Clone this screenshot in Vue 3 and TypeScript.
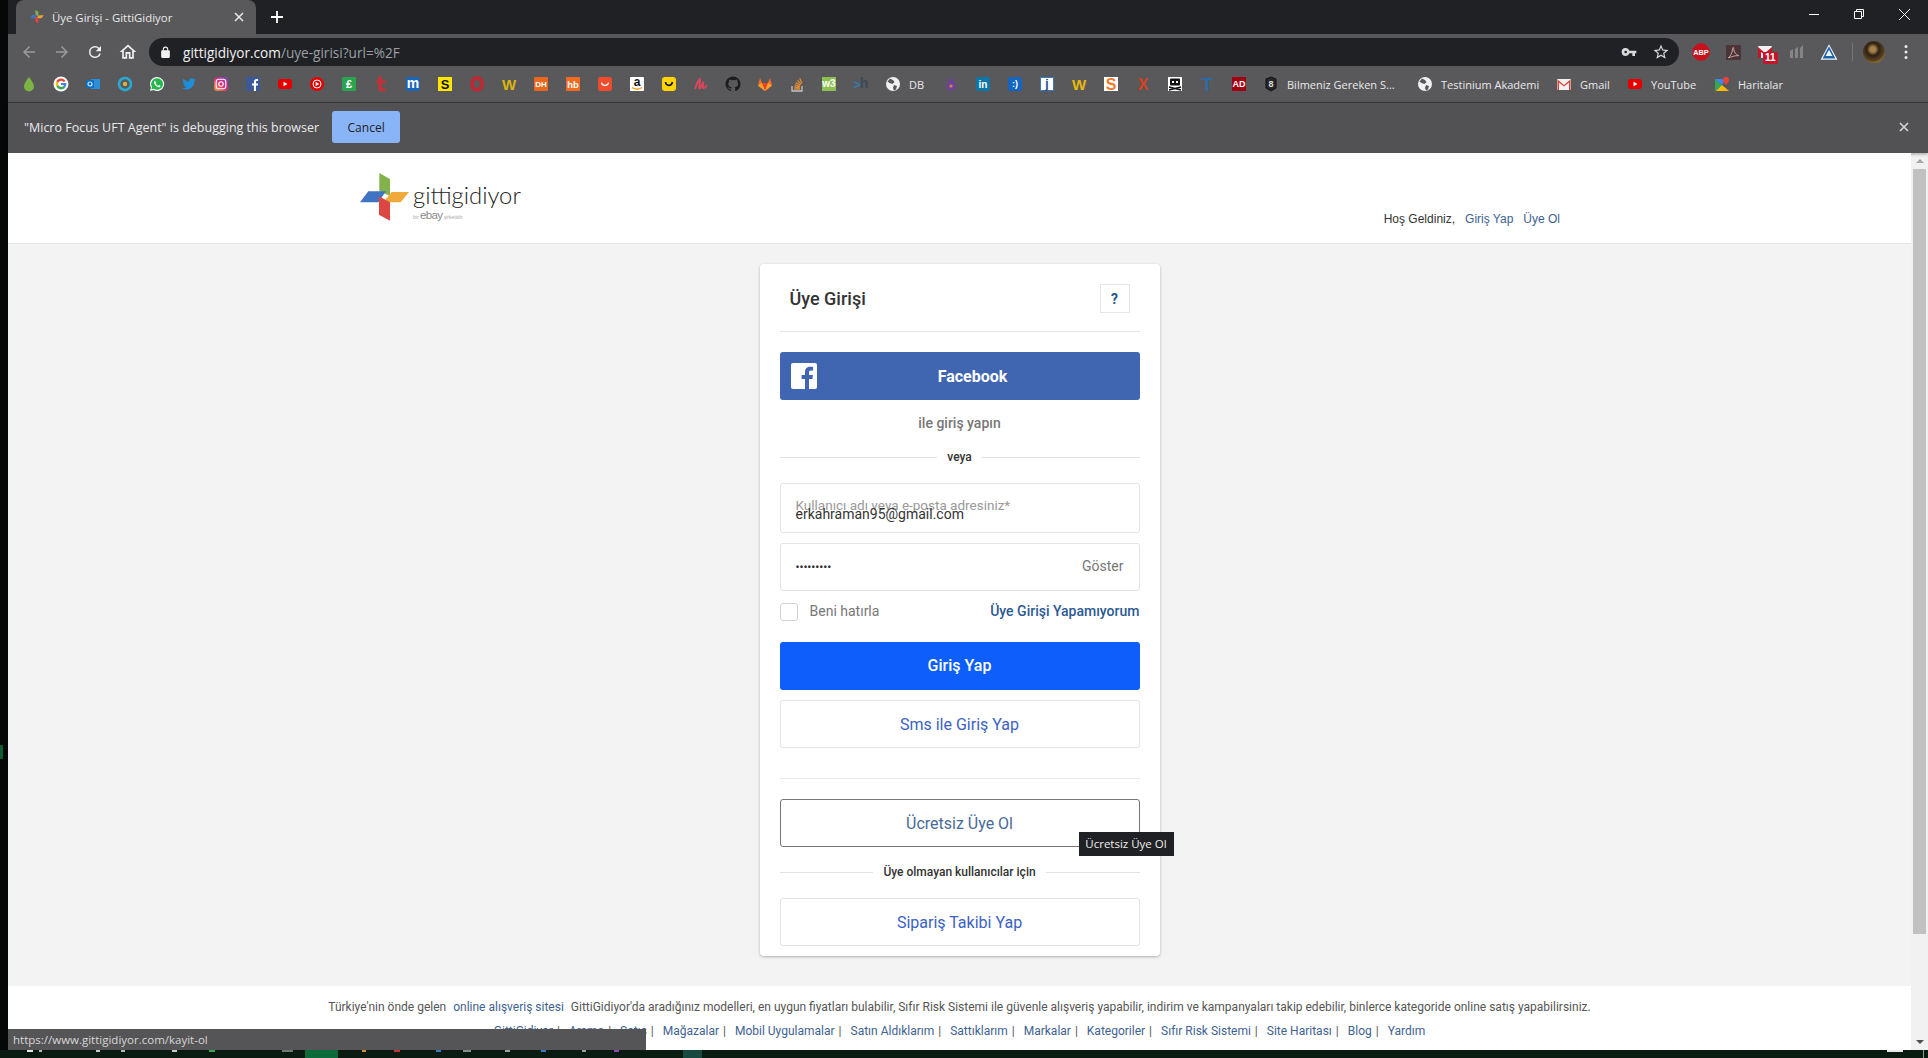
<script setup lang="ts">
// Chrome window around the GittiGidiyor login page.
type Mark = { svg?: string; label?: string; width?: number };

const txt = (s: string, fill: string, size = 11, y = 12, weight = 700) =>
  `<text x="8" y="${y}" text-anchor="middle" font-family="Liberation Sans, sans-serif" font-size="${size}" font-weight="${weight}" fill="${fill}">${s}</text>`;
const tile = (bg: string, r = 1) => `<rect x="1" y="1" width="14" height="14" rx="${r}" fill="${bg}"/>`;
const globe =
  '<circle cx="8" cy="8" r="7" fill="#f1f1f1"/><path d="M5 2.5l3 1.5 1.5 2-2 2-3-1-2-1.5zM9 9l3 1-1 3.5-2 1-1-2.5z" fill="#58585a"/>';

const icons: Record<string, string> = {
  drop: '<path d="M8 1C8 1 3 7 3 10.5a5 5 0 0 0 10 0C13 7 8 1 8 1z" fill="#7cb342"/>',
  google:
    '<circle cx="8" cy="8" r="7.5" fill="#fff"/><path d="M12.6 5A5.4 5.4 0 0 0 3.4 5.2L5.4 6.8A3 3 0 0 1 10.6 6z" fill="#ea4335"/><path d="M3.4 5.2a5.4 5.4 0 0 0 0 5.6l2-1.6a3 3 0 0 1 0-2.4z" fill="#fbbc05"/><path d="M3.4 10.8a5.4 5.4 0 0 0 8.8.6l-1.9-1.5a3 3 0 0 1-4.9-.7z" fill="#34a853"/><path d="M8 7v2h3l-.7 1 1.9 1.4A5.4 5.4 0 0 0 13.4 7z" fill="#4285f4"/>',
  outlook:
    '<rect x="6" y="3" width="9" height="10" fill="#2a8fd8"/><rect x="1" y="4" width="8" height="8" rx="1" fill="#0a6ebd"/><circle cx="5" cy="8" r="2" fill="none" stroke="#cfe6f7" stroke-width="1.2"/>',
  ring: '<circle cx="8" cy="8" r="6" fill="none" stroke="#29a9d6" stroke-width="2.6"/><circle cx="8" cy="8" r="2.2" fill="#d8b23c"/>',
  whatsapp:
    '<path d="M8 1a7 7 0 0 0-6 10.6L1 15l3.5-1A7 7 0 1 0 8 1z" fill="#fff"/><path d="M8 2.2a5.8 5.8 0 0 0-5 8.8l-.6 2.3 2.4-.6A5.8 5.8 0 1 0 8 2.2z" fill="#25b84c"/><path d="M5.8 4.8c-.8.6-1 1.700-.4 3 .8 1.700 2.300 3.100 4 3.500 1 .2 1.900-.4 2.100-1.300L9.900 9l-.9.800C8 9.400 7 8.400 6.600 7.300l.7-.9z" fill="#fff"/>',
  twitter:
    '<path d="M15 3.600c-.5.200-1 .4-1.600.4.600-.3 1-.9 1.200-1.500-.5.300-1.100.5-1.700.7a2.800 2.800 0 0 0-4.800 2.500A8 8 0 0 1 2.300 2.800a2.800 2.800 0 0 0 .9 3.700c-.5 0-.9-.1-1.300-.3 0 1.400 1 2.500 2.300 2.800-.4.1-.8.1-1.300 0 .4 1.100 1.400 1.900 2.600 2A5.700 5.700 0 0 1 1 12.200 8 8 0 0 0 13.300 5.100c.6-.4 1.200-.9 1.700-1.500z" fill="#1d8fd8"/>',
  insta:
    '<defs><linearGradient id="ig" x1="0" y1="1" x2="1" y2="0"><stop offset="0" stop-color="#f7a437"/><stop offset=".5" stop-color="#d92d77"/><stop offset="1" stop-color="#7a3fc4"/></linearGradient></defs><rect x="1" y="1" width="14" height="14" rx="3.500" fill="url(#ig)"/><rect x="3.200" y="3.200" width="9.600" height="9.600" rx="2.500" fill="none" stroke="#fff" stroke-width="1.100"/><circle cx="8" cy="8" r="2.200" fill="none" stroke="#fff" stroke-width="1.100"/>',
  fb: tile('#3b5998') + '<path d="M11 15V9.500h1.800l.3-2.100H11V6.100c0-.6.200-1 1-1h1.100V3.200C12.900 3.200 12.300 3.100 11.600 3.100 10 3.100 8.900 4.100 8.900 5.900v1.500H7v2.100h1.900V15z" fill="#fff"/>',
  yt: '<rect x="1" y="3" width="14" height="10" rx="3" fill="#e60000"/><path d="M6.500 5.700v4.600L10.500 8z" fill="#fff"/>',
  ytm: '<circle cx="8" cy="8" r="7" fill="#e60000"/><circle cx="8" cy="8" r="4" fill="none" stroke="#fff" stroke-width="1"/><path d="M6.600 5.800v4.400L10.200 8z" fill="#fff"/>',
  lira: tile('#2aa44f') + txt('₤', '#fff', 11),
  tumblr: '<path d="M5.500 .5h3.500v3.800h3.500v3H9v3.700c0 1.200.9 1.600 3.500 1.200V15.500H8.200C6 15.500 5 14 5 12.300V7.300H3.500V4.800C5 4.300 5.300 2.800 5.500 .5z" fill="#c0323a"/>',
  medium: tile('#1a66b8', 2) + txt('m', '#fff', 14, 12),
  s: tile('#ffe600', 0) + txt('S', '#111', 13, 13),
  opera: '<ellipse cx="8" cy="8" rx="5" ry="6" fill="none" stroke="#b92a35" stroke-width="4"/>',
  w: txt('W', '#dcb50f', 15, 14),
  dh: tile('#e9681e', 1) + txt('DH', '#fff', 8, 11),
  hb: tile('#f36a21', 1) + txt('hb', '#fff', 9.500, 11.500),
  smile: tile('#ee4a2e', 2) + '<path d="M4.500 6.500c.5 4 6.500 4 7 0" fill="none" stroke="#fff" stroke-width="1.300"/>',
  amazon: tile('#fff', 1) + txt('a', '#111', 12, 10) + '<path d="M3 11.500c3 2 7 2 10 0" fill="none" stroke="#f90" stroke-width="1.400"/>',
  yellow: tile('#ffd400', 3) + '<path d="M4.500 6c.5 4.500 6 4.500 7 0" fill="none" stroke="#111" stroke-width="1.700"/>',
  script: '<path d="M2 13C3.500 8 5.500 4.500 7 3c.8 1.500-1.300 7-.7 9C7.500 13 9 8.500 10.300 6c0 2.500-1 5.500 0 6s2.300-1 3.700-3" fill="none" stroke="#d8455c" stroke-width="2"/>',
  github:
    '<path d="M8 .500a7.500 7.500 0 0 0-2.400 14.600c.4.100.5-.2.500-.4v-1.300c-2.100.5-2.500-1-2.500-1-.4-.9-.9-1.100-.9-1.100-.7-.5 0-.5 0-.5.800.1 1.200.8 1.200.8.700 1.200 1.800.8 2.300.6 0-.5.300-.8.500-1-1.700-.2-3.400-.8-3.400-3.700 0-.8.300-1.500.8-2-.1-.2-.3-1 .1-2 0 0 .6-.2 2.100.8a7 7 0 0 1 3.800 0c1.500-1 2.100-.8 2.100-.8.400 1 .2 1.800.1 2 .5.500.8 1.200.8 2 0 2.900-1.800 3.500-3.400 3.700.3.200.5.700.5 1.400v2c0 .2.100.5.500.4A7.500 7.500 0 0 0 8 .500z" fill="#1b1b1d"/>',
  gitlab:
    '<path d="M8 15L1 9.500 3 2l2 5h6l2-5 2 7.500z" fill="#fc6d26"/><path d="M8 15L5 7h6z" fill="#e24329"/><path d="M1 9.500L5 7l3 8zM15 9.500L11 7l-3 8z" fill="#fca326"/>',
  stack:
    '<path d="M3 10v5h10v-5" fill="none" stroke="#c4c3c3" stroke-width="1.300"/><path d="M5 13h6M5.200 11l5.600.5M5.800 8.800l5.200 1.500M6.800 6.600l4.600 2.700M8.600 4.400l3.500 4M10.800 2.300l2 5" stroke="#e08a32" stroke-width="1.300" fill="none"/>',
  w3: tile('#8cc152', 0) + txt('w3', '#fff', 10, 11),
  chevh: txt('&gt;', '#3678ad', 12, 13).replace('x="8"', 'x="4"') + txt('h', '#3a4a5a', 14, 12).replace('x="8"', 'x="11"'),
  globe,
  purple: '<path d="M5 2c0 2 1 3 3 3s3-1 3-3" fill="none" stroke="#6f3fa0" stroke-width="1.300"/><circle cx="8" cy="10" r="4.500" fill="#6f3fa0"/><circle cx="8" cy="10" r="1.600" fill="#d58a2d"/>',
  linkedin: tile('#0e76a8', 2) + txt('in', '#fff', 10, 12),
  blue: tile('#1565c0', 2) + txt(':)', '#fff', 9, 11),
  j: '<rect x="1.500" y="1.500" width="13" height="13" fill="#fff" stroke="#3b78c2"/>' + txt('j', '#1b4a90', 12, 12),
  wy: txt('W', '#e8b90c', 15, 14),
  so: '<rect x="1" y="1" width="14" height="14" fill="#fff"/>' + txt('S', '#f07c2b', 16, 14),
  x: txt('X', '#d8401f', 16, 14),
  skull: '<rect x="1" y="1" width="14" height="14" fill="#fff"/><rect x="3" y="2.500" width="10" height="7" rx="1" fill="#111"/><rect x="5" y="5" width="2" height="2" fill="#fff"/><rect x="9" y="5" width="2" height="2" fill="#fff"/><path d="M2 14l12-3M2 11l12 3" stroke="#111" stroke-width="1.500"/>',
  t: txt('T', '#2b6ca8', 18, 15),
  ad: tile('#a00012', 0) + txt('AD', '#fff', 9, 11),
  shield: '<path d="M3 3l5-2 5 2v9l-5 3-5-3z" fill="#26262a" stroke="#111"/>' + txt('8', '#ddd', 9, 11),
  gmail: '<rect x="1" y="3" width="14" height="11" rx="1" fill="#f2f2f2"/><path d="M1.500 3.500L8 9l6.500-5.500V14H13V6.500L8 10.500 3 6.500V14H1.500z" fill="#d8402f"/>',
  maps: '<path d="M1 3l7 6-6 6H1z" fill="#34a853"/><path d="M1 3h7l2 2-2 4z" fill="#4285f4"/><path d="M8 9l7 6H2z" fill="#fbbc05"/><path d="M12 1a3 3 0 0 0-3 3c0 2 3 5 3 5s3-3 3-5a3 3 0 0 0-3-3z" fill="#ea4335"/>',
};

const marks: Mark[] = [
  ...[
    'drop', 'google', 'outlook', 'ring', 'whatsapp', 'twitter', 'insta', 'fb', 'yt', 'ytm', 'lira', 'tumblr',
    'medium', 's', 'opera', 'w', 'dh', 'hb', 'smile', 'amazon', 'yellow', 'script', 'github', 'gitlab', 'stack',
    'w3', 'chevh',
  ].map((k) => ({ svg: icons[k] })),
  { svg: icons.globe, label: 'DB', width: 58 },
  ...['purple', 'linkedin', 'blue', 'j', 'wy', 'so', 'x', 'skull', 't', 'ad', 'shield'].map((k) => ({ svg: icons[k] })),
  { label: 'Bilmeniz Gereken S...', width: 122 },
  { svg: icons.globe, label: 'Testinium Akademi', width: 139 },
  { svg: icons.gmail, label: 'Gmail', width: 71 },
  { svg: icons.yt, label: 'YouTube', width: 87 },
  { svg: icons.maps, label: 'Haritalar', width: 90 },
];

const footerLinks = [
  'GittiGidiyor', 'Arama', 'Satış', 'Mağazalar', 'Mobil Uygulamalar', 'Satın Aldıklarım', 'Sattıklarım',
  'Markalar', 'Kategoriler', 'Sıfır Risk Sistemi', 'Site Haritası', 'Blog', 'Yardım',
];

// tops of the taskbar icons peeking out below the window
const taskbits = [
  { x: 27, w: 6, c: '#e6e6e6' }, { x: 39, w: 3, c: '#bbb' }, { x: 96, w: 4, c: '#c9c9c9' }, { x: 121, w: 4, c: '#b5b5b5' },
  { x: 172, w: 5, c: '#c9c9c9' }, { x: 209, w: 6, c: '#2fa84f' }, { x: 282, w: 11, c: '#6e7a72' }, { x: 305, w: 33, c: '#0d6b3c', h: 8 },
  { x: 362, w: 4, c: '#d8902f' }, { x: 394, w: 6, c: '#c8352c' }, { x: 436, w: 5, c: '#2d7fc9' }, { x: 463, w: 8, c: '#87908a' },
  { x: 505, w: 5, c: '#9aa39d' }, { x: 541, w: 5, c: '#2d7fc9' }, { x: 582, w: 4, c: '#9aa39d' }, { x: 614, w: 5, c: '#8d4ab8' },
  { x: 683, w: 19, c: '#17493f', h: 8 }, { x: 1887, w: 16, c: '#e9e9e9' }, { x: 1923, w: 1, c: '#8e9a92', h: 8 },
];
const taskFlow = taskbits.map((b, i) => ({
  ...b,
  gap: b.x - (i ? taskbits[i - 1].x + taskbits[i - 1].w : 0),
}));
</script>

<template>
  <div class="screen">
    <div class="desk-blip" />
    <div class="window">
      <div class="tabstrip">
        <div class="tab">
          <svg class="favicon" viewBox="0 0 50 50" width="14" height="14">
            <path d="M19.300 0L30 6V23L19.300 18.300z" fill="#7fb24a" />
            <path d="M0 29.300L8.300 18.300H26L18.300 29.300z" fill="#3f73c4" />
            <path d="M23.300 29.300L31.700 19H49L40.700 29.300z" fill="#f0a531" />
            <path d="M19 23.300L30 29.300V47.700L19 41.700z" fill="#dd4340" />
          </svg>
          <span class="tab-title">Üye Girişi - GittiGidiyor</span>
          <svg class="tab-close" viewBox="0 0 10 10" width="10" height="10">
            <path d="M1 1l8 8M9 1l-8 8" stroke="#e8eaed" stroke-width="1.500" />
          </svg>
        </div>
        <svg class="newtab" viewBox="0 0 12 12" width="12" height="12">
          <path d="M6 0v12M0 6h12" stroke="#fff" stroke-width="1.800" />
        </svg>
        <div class="winctl">
          <span class="wbtn"><svg viewBox="0 0 10 10" width="10" height="10"><path d="M0 5.500h10" stroke="#fff" /></svg></span>
          <span class="wbtn"><svg viewBox="0 0 10 10" width="10" height="10"><path d="M.5 2.500h7v7h-7zM2.500 2.500v-2h7v7h-2" fill="none" stroke="#fff" /></svg></span>
          <span class="wbtn last"><svg viewBox="0 0 10 10" width="11" height="11"><path d="M0 0l10 10M10 0L0 10" stroke="#fff" stroke-width=".9" /></svg></span>
        </div>
      </div>

      <div class="toolbar">
        <span class="nav dim"><svg viewBox="0 0 24 24" width="18" height="18"><path d="M20 11H7.830l5.590-5.590L12 4l-8 8 8 8 1.410-1.410L7.830 13H20v-2z" /></svg></span>
        <span class="nav dim"><svg viewBox="0 0 24 24" width="18" height="18"><path d="M4 11h12.170l-5.590-5.590L12 4l8 8-8 8-1.410-1.410L16.170 13H4v-2z" /></svg></span>
        <span class="nav"><svg viewBox="0 0 24 24" width="18" height="18"><path d="M17.650 6.350A7.960 7.960 0 0 0 12 4a8 8 0 1 0 7.750 10h-2.080A6 6 0 1 1 12 6c1.660 0 3.140.69 4.220 1.780L13 11h7V4l-2.350 2.350z" /></svg></span>
        <span class="nav"><svg viewBox="0 0 24 24" width="20" height="20"><path d="M12 5.690l5 4.500V18h-2v-6H9v6H7v-7.810l5-4.500M12 3L2 12h3v8h6v-6h2v6h6v-8h3L12 3z" /></svg></span>
        <div class="omnibox">
          <svg class="lock" viewBox="0 0 24 24" width="13" height="13"><path d="M18 8h-1V6a5 5 0 0 0-10 0v2H6a2 2 0 0 0-2 2v10a2 2 0 0 0 2 2h12a2 2 0 0 0 2-2V10a2 2 0 0 0-2-2zM9 6a3 3 0 0 1 6 0v2H9V6z" /></svg>
          <span class="url"><b>gittigidiyor.com</b><i>/uye-girisi?url=%2F</i></span>
          <span class="nav pill"><svg viewBox="0 0 24 24" width="16" height="16"><path d="M12.650 10A6 6 0 1 0 7 18a6 6 0 0 0 5.650-4H17v4h4v-4h2v-4H12.650zM7 14a2 2 0 1 1 0-4 2 2 0 0 1 0 4z" /></svg></span>
          <span class="nav pill"><svg viewBox="0 0 24 24" width="18" height="18"><path d="M22 9.240l-7.190-.62L12 2 9.190 8.630 2 9.240l5.460 4.730L5.820 21 12 17.270 18.180 21l-1.630-7.030L22 9.240zM12 15.400l-3.760 2.270 1-4.280-3.320-2.880 4.380-.38L12 6.100l1.710 4.040 4.380.38-3.320 2.880 1 4.280L12 15.400z" /></svg></span>
        </div>
        <div class="exts">
          <span class="nav ext"><svg viewBox="0 0 16 16" width="18" height="18"><path d="M5 .5h6L15.500 5v6L11 15.500H5L.5 11V5z" fill="#c9111c" /><text x="8" y="10.500" text-anchor="middle" font-family="Liberation Sans, sans-serif" font-size="6.500" font-weight="700" fill="#fff">ABP</text></svg></span>
          <span class="nav ext"><svg viewBox="0 0 16 16" width="17" height="17"><rect x="1" y="1" width="14" height="14" fill="#4a3436" /><path d="M3 13c2-1 3.500-4 4.200-8.500.2-1.800 1-1.800 1 0 0 3 2 5.500 4.800 6.500-2.500-.2-5 .3-7.500 1.300z" fill="none" stroke="#c9a6a6" stroke-width=".9" /></svg></span>
          <span class="nav ext mail">
            <svg viewBox="0 0 16 16" width="16" height="16"><rect x="1" y="2" width="14" height="12" rx="1" fill="#f1f1f1" /><path d="M1 3l7 6 7-6v11h-3V8L8 11 4 8v6H1z" fill="#c4162a" /></svg>
            <span class="badge">11</span>
          </span>
          <span class="nav ext"><svg viewBox="0 0 16 16" width="16" height="16"><path d="M1 14V7l3-2v9zM6 14V5l3-2v11zM11 14V4l3-3v13z" fill="#858585" /></svg></span>
          <span class="nav ext"><svg viewBox="0 0 16 16" width="18" height="18"><path d="M8 1L.5 14.800h15z" fill="#f0f6fc" /><path d="M8 2.800L2.300 13.800h11.400z" fill="#1f64a8" /><path d="M8 6L5 11.500h6z" fill="#f0f6fc" /></svg></span>
          <span class="sep" />
          <span class="nav ext"><span class="avatar" /></span>
          <span class="nav ext"><svg viewBox="0 0 4 16" width="4" height="16"><circle cx="2" cy="2.500" r="1.500" fill="#e8eaed" /><circle cx="2" cy="8" r="1.500" fill="#e8eaed" /><circle cx="2" cy="13.500" r="1.500" fill="#e8eaed" /></svg></span>
        </div>
      </div>

      <div class="bookmarks">
        <div
          v-for="(m, i) in marks"
          :key="i"
          class="mark"
          :class="{ labeled: m.label }"
          :style="{ width: `${m.width ?? 32}px` }"
        >
          <svg v-if="m.svg" viewBox="0 0 16 16" width="16" height="16" v-html="m.svg" />
          <span v-if="m.label">{{ m.label }}</span>
        </div>
      </div>

      <div class="infobar">
        <span class="info-text">"Micro Focus UFT Agent" is debugging this browser</span>
        <span class="cancel">Cancel</span>
        <svg class="info-close" viewBox="0 0 10 10" width="10" height="10">
          <path d="M1 1l8 8M9 1l-8 8" stroke="#d5d5d6" stroke-width="1.700" />
        </svg>
      </div>

      <div class="viewport">
        <div class="page">
          <header class="site-head">
            <div class="logo">
              <svg viewBox="0 0 50 48" width="50" height="48">
                <path d="M19.300 0L30 6V23L19.300 18.300z" fill="#83b24d" />
                <path d="M0 29.300L8.300 18.300H26L18.300 29.300z" fill="#3f73c4" />
                <path d="M23.300 29.300L31.700 19H49L40.700 29.300z" fill="#f0a93a" />
                <path d="M19 23.300L30 29.300V47.700L19 41.700z" fill="#dd4742" />
                <circle cx="25" cy="23.500" r="1.600" fill="#fff" />
              </svg>
              <div class="logo-words">
                <span class="logo-name">gittigidiyor</span>
                <span class="logo-sub"><small>bir</small> ebay <small>şirketidir</small></span>
              </div>
            </div>
            <div class="hello">
              <span>Hoş Geldiniz,</span>
              <a>Giriş Yap</a>
              <a>Üye Ol</a>
            </div>
          </header>

          <main class="main">
            <section class="card">
              <div class="card-head">
                <h1>Üye Girişi</h1>
                <span class="help">?</span>
              </div>

              <div class="btn fb">
                <span class="fb-mark">
                  <svg viewBox="0 0 26 26" width="26" height="26">
                    <rect width="26" height="26" rx="2" fill="#fff" />
                    <path d="M18 26V16h3.400l.5-4H18V9.500c0-1.200.4-2 2-2h2.100V4c-.4 0-1.600-.2-3-.2-3 0-5.100 1.800-5.100 5.200V12h-3.400v4H14v10z" fill="#4065b1" />
                  </svg>
                </span>
                Facebook
              </div>
              <p class="with">ile giriş yapın</p>
              <div class="or"><span>veya</span></div>

              <div class="field tall">
                <span class="float">Kullanıcı adı veya e-posta adresiniz*</span>
                <span class="value">erkahraman95@gmail.com</span>
              </div>
              <div class="field pass">
                <span class="dots">•••••••••</span>
                <span class="show">Göster</span>
              </div>

              <div class="remember">
                <label><span class="check" /><span class="lift">Beni hatırla</span></label>
                <a class="lift">Üye Girişi Yapamıyorum</a>
              </div>

              <div class="btn primary">Giriş Yap</div>
              <div class="btn ghost sms">Sms ile Giriş Yap</div>
              <div class="rule" />
              <div class="signup-wrap">
                <div class="btn ghost hovered">Ücretsiz Üye Ol</div>
                <span class="tooltip">Ücretsiz Üye Ol</span>
              </div>
              <div class="or low"><span>Üye olmayan kullanıcılar için</span></div>
              <div class="btn ghost track">Sipariş Takibi Yap</div>
            </section>
          </main>

          <footer class="site-foot">
            <p class="seo">
              Türkiye'nin önde gelen <a>online alışveriş sitesi</a> GittiGidiyor'da aradığınız modelleri, en uygun
              fiyatları bulabilir, Sıfır Risk Sistemi ile güvenle alışveriş yapabilir, indirim ve kampanyaları takip
              edebilir, binlerce kategoride online satış yapabilirsiniz.
            </p>
            <nav class="foot-links">
              <template v-for="(l, i) in footerLinks" :key="l">
                <a>{{ l }}</a><span v-if="i < footerLinks.length - 1" class="bar">|</span>
              </template>
            </nav>
          </footer>

          <div class="status">https://www.gittigidiyor.com/kayit-ol</div>
        </div>

        <div class="scrollbar">
          <span class="sb-btn"><i class="arrow up" /></span>
          <span class="thumb" />
          <span class="sb-rest" />
          <span class="sb-btn"><i class="arrow down" /></span>
        </div>
      </div>
    </div>

    <div class="taskbar">
      <span
        v-for="(b, i) in taskFlow"
        :key="i"
        :style="{ marginLeft: `${b.gap}px`, width: `${b.w}px`, height: `${b.h ?? 2}px`, background: b.c }"
      />
    </div>
  </div>
</template>

<style scoped>
.screen {
  position: relative;
  width: 1928px;
  height: 1058px;
  overflow: hidden;
  background: #050806;
  display: flex;
  flex-direction: column;
  font-family: Roboto, "Liberation Sans", sans-serif;
}
.desk-blip {
  position: absolute;
  left: 0;
  top: 745px;
  width: 3px;
  height: 14px;
  background: #0e5a33;
}
.window {
  margin-left: 8px;
  width: 1920px;
  height: 1050px;
  display: flex;
  flex-direction: column;
  color: #e8eaed;
  font-family: "Open Sans", "Noto Sans", sans-serif;
}
.tabstrip {
  height: 34px;
  background: #202124;
  display: flex;
  align-items: flex-end;
  padding-left: 8px;
}
.tab {
  width: 240px;
  height: 34px;
  box-sizing: border-box;
  background: #59585a;
  border-radius: 8px 8px 0 0;
  display: flex;
  align-items: center;
  padding-left: 14px;
  font-size: 11.400px;
}
.tab-title {
  margin-left: 8px;
  width: 182px;
}
.newtab {
  margin: 0 0 11px 15px;
}
.winctl {
  margin-left: auto;
  align-self: stretch;
  display: flex;
  align-items: center;
  padding-bottom: 6px;
}
.wbtn {
  width: 45px;
  display: flex;
  justify-content: center;
}
.wbtn.last {
  width: 47px;
}
.toolbar {
  height: 32px;
  background: #59585a;
  display: flex;
  align-items: flex-end;
  padding-left: 4px;
}
.nav {
  width: 33px;
  height: 28px;
  display: flex;
  align-items: center;
  justify-content: center;
  fill: #f1f1f1;
}
.nav.dim {
  fill: #9a9a9b;
}
.omnibox {
  margin-left: 5px;
  width: 1530px;
  height: 28px;
  box-sizing: border-box;
  border-radius: 14px;
  background: #202124;
  display: flex;
  align-items: center;
  padding-left: 10px;
  padding-right: 2px;
  font-size: 13.600px;
}
.lock {
  fill: #f1f1f1;
}
.url {
  margin-left: 11px;
  flex: 1;
}
.url b {
  font-weight: 400;
  color: #f1f1f1;
}
.url i {
  font-style: normal;
  color: #9aa0a6;
}
.nav.pill {
  width: 32px;
  fill: #d9d9d9;
}
.exts {
  display: flex;
  align-items: center;
  margin-left: 6px;
  height: 28px;
}
.nav.ext {
  width: 32px;
  position: relative;
}
.sep {
  width: 1px;
  height: 18px;
  margin: 0 5px 0 7px;
  background: #747375;
}
.badge {
  position: absolute;
  left: 14px;
  top: 14px;
  padding: 0 2px;
  height: 12px;
  border-radius: 2px;
  background: #c4162a;
  color: #fff;
  font: 700 10px/12px "Liberation Sans", sans-serif;
}
.avatar {
  width: 22px;
  height: 22px;
  border-radius: 50%;
  background: radial-gradient(circle at 45% 38%, #a8824a 0 14%, #2d2014 34%, #5a4220 62%, #a07a30 78%, #2a1e10 100%);
}
.bookmarks {
  height: 36px;
  background: #59585a;
  border-bottom: 1px solid #39393b;
  display: flex;
  align-items: center;
  padding-left: 5px;
  font-size: 11px;
  white-space: nowrap;
}
.mark {
  flex: none;
  display: flex;
  align-items: center;
  justify-content: center;
}
.mark.labeled {
  justify-content: flex-start;
  gap: 8px;
  padding-left: 8px;
  box-sizing: border-box;
}
.mark.labeled:not(:has(svg)) {
  padding-left: 0;
}
.infobar {
  height: 50px;
  box-sizing: border-box;
  background: #525153;
  display: flex;
  align-items: center;
  padding: 0 0 2px 16px;
  font-size: 12.500px;
  box-shadow: 0 1px 3px rgba(0, 0, 0, 0.35);
  position: relative;
}
.cancel {
  margin-left: 13px;
  width: 68px;
  height: 32px;
  border-radius: 3px;
  background: #8ab4f8;
  color: #202124;
  display: flex;
  align-items: center;
  justify-content: center;
  font-size: 12px;
}
.info-close {
  margin-left: auto;
  margin-right: 19px;
}
.viewport {
  flex: 1;
  min-height: 0;
  display: flex;
}
.page {
  position: relative;
  flex: 1;
  min-width: 0;
  display: flex;
  flex-direction: column;
  background: #f3f3f3;
  font-family: Roboto, sans-serif;
  color: #333;
}
.site-head {
  height: 91px;
  box-sizing: border-box;
  background: #fff;
  border-bottom: 1px solid #e6e6e6;
  padding: 20px 351px 0 352px;
  display: flex;
  justify-content: space-between;
}
.logo {
  display: flex;
  align-items: flex-start;
  gap: 3px;
}
.logo-words {
  display: flex;
  flex-direction: column;
}
.logo-name {
  font: 300 23.800px/26px Lato, sans-serif;
  color: #222;
  margin-top: 9px;
}
.logo-sub {
  font: 400 11.500px/13px "Liberation Sans", sans-serif;
  color: #8a8a8a;
  margin-top: 1px;
  letter-spacing: -0.7px;
  word-spacing: -1px;
}
.logo-sub small {
  font-size: 5px;
  letter-spacing: 0;
  color: #aaa;
}
.hello {
  align-self: flex-end;
  display: flex;
  gap: 10px;
  padding-bottom: 17px;
  font: 12px/14px "Liberation Sans", sans-serif;
  color: #333;
}
.hello a {
  color: #3e6291;
}
.main {
  flex: 1;
  min-height: 0;
  display: flex;
  justify-content: center;
  align-items: flex-start;
  padding-top: 20px;
}
.card {
  width: 400px;
  box-sizing: border-box;
  background: #fff;
  border-radius: 4px;
  box-shadow: 0 1px 3px rgba(0, 0, 0, 0.28);
  padding: 0 20px 10px;
  display: flex;
  flex-direction: column;
}
.card-head {
  height: 68px;
  box-sizing: border-box;
  border-bottom: 1px solid #e6e6e6;
  padding: 20px 10px 0;
  display: flex;
  justify-content: space-between;
  align-items: flex-start;
}
.card-head h1 {
  margin: 0;
  font-size: 18px;
  font-weight: 500;
  line-height: 30px;
  color: #333;
}
.help {
  width: 30px;
  height: 29px;
  box-sizing: border-box;
  border: 1px solid #e6e6e6;
  display: flex;
  align-items: center;
  justify-content: center;
  font-size: 14px;
  font-weight: 700;
  color: #2e5588;
}
.btn {
  position: relative;
  height: 48px;
  box-sizing: border-box;
  border-radius: 3px;
  display: flex;
  align-items: center;
  justify-content: center;
  font-size: 16px;
}
.fb {
  margin-top: 20px;
  background: #4065b1;
  color: #fff;
  font-weight: 700;
  padding-left: 26px;
}
.fb-mark {
  position: absolute;
  left: 11px;
  top: 11px;
  height: 26px;
}
.with {
  margin: 14px 0 0;
  text-align: center;
  font-size: 14px;
  font-weight: 500;
  line-height: 18px;
  color: #777;
}
.or {
  margin-top: 17px;
  height: 16px;
  display: flex;
  align-items: center;
  gap: 10px;
  font-size: 12px;
  font-weight: 500;
  color: #333;
}
.or::before,
.or::after {
  content: "";
  flex: 1;
  height: 1px;
  background: #e2e2e2;
}
.field {
  position: relative;
  margin-top: 10px;
  height: 48px;
  box-sizing: border-box;
  border: 1px solid #e3e3e3;
  border-radius: 3px;
  font-size: 14px;
}
.tall {
  margin-top: 18px;
  height: 50px;
}
.float {
  position: absolute;
  left: 15px;
  top: 13px;
  font-size: 13.500px;
  line-height: 16px;
  color: #999;
}
.value {
  position: absolute;
  left: 15px;
  top: 22px;
  line-height: 16px;
  color: #333;
}
.pass {
  display: flex;
  align-items: center;
  justify-content: space-between;
  padding: 0 15px 2px;
}
.dots {
  font-size: 11px;
  font-weight: 700;
  color: #333;
  padding-top: 2px;
}
.show {
  color: #777;
}
.remember {
  margin-top: 12px;
  height: 18px;
  display: flex;
  align-items: center;
  justify-content: space-between;
  font-size: 14px;
}
.remember label {
  display: flex;
  align-items: center;
  gap: 12px;
  color: #777;
}
.lift {
  margin-top: -2px;
}
.check {
  width: 18px;
  height: 18px;
  box-sizing: border-box;
  border: 1px solid #d2d2d2;
  border-radius: 3px;
}
.remember a {
  font-weight: 500;
  color: #2c5a94;
}
.primary {
  margin-top: 21px;
  padding-bottom: 2px;
  background: #0d5efa;
  color: #fff;
  font-weight: 500;
}
.ghost {
  border: 1px solid #e3e3e3;
  color: #3b62c4;
}
.sms {
  margin-top: 10px;
}
.rule {
  margin-top: 30px;
  height: 1px;
  background: #e8e8e8;
}
.signup-wrap {
  position: relative;
  margin-top: 20px;
}
.hovered {
  border-color: #767676;
  color: #4a6a97;
}
.tooltip {
  position: absolute;
  left: 299px;
  top: 33px;
  width: 95px;
  height: 24px;
  background: #202124;
  color: #eee;
  font: 11.500px/24px "Open Sans", sans-serif;
  text-align: center;
  white-space: nowrap;
}
.or.low {
  margin-top: 17px;
}
.track {
  margin-top: 18px;
}
.site-foot {
  height: 64px;
  box-sizing: border-box;
  background: #fff;
  padding-top: 12px;
  text-align: center;
  font-size: 12px;
  line-height: 18px;
  color: #555;
}
.seo {
  margin: 0;
}
.seo a {
  margin: 0 4px;
  color: #3e6291;
}
.foot-links {
  margin-top: 6px;
  display: flex;
  justify-content: center;
  color: #3e6291;
}
.bar {
  margin: 0 9px 0 4px;
  color: #555;
}
.status {
  position: absolute;
  left: 0;
  bottom: 0;
  width: 638px;
  height: 21px;
  background: #555456;
  color: #d7d7d7;
  padding-left: 5px;
  box-sizing: border-box;
  font: 11.500px/21px "Open Sans", sans-serif;
}
.scrollbar {
  width: 17px;
  background: #f1f1f1;
  display: flex;
  flex-direction: column;
  align-items: center;
}
.sb-btn {
  width: 17px;
  height: 16px;
  flex: none;
  display: flex;
  align-items: center;
  justify-content: center;
}
.arrow {
  width: 0;
  height: 0;
  border-left: 4px solid transparent;
  border-right: 4px solid transparent;
}
.arrow.up {
  border-bottom: 4px solid #a3a3a3;
}
.arrow.down {
  border-top: 4px solid #505050;
}
.thumb {
  width: 13px;
  height: 765px;
  flex: none;
  background: #c1c1c1;
}
.sb-rest {
  flex: 1;
}
.taskbar {
  height: 8px;
  background: #0a1b11;
  display: flex;
  align-items: flex-start;
}
.taskbar span {
  flex: none;
}
</style>

<style>
html,
body {
  margin: 0;
  background: #050806;
}
</style>
